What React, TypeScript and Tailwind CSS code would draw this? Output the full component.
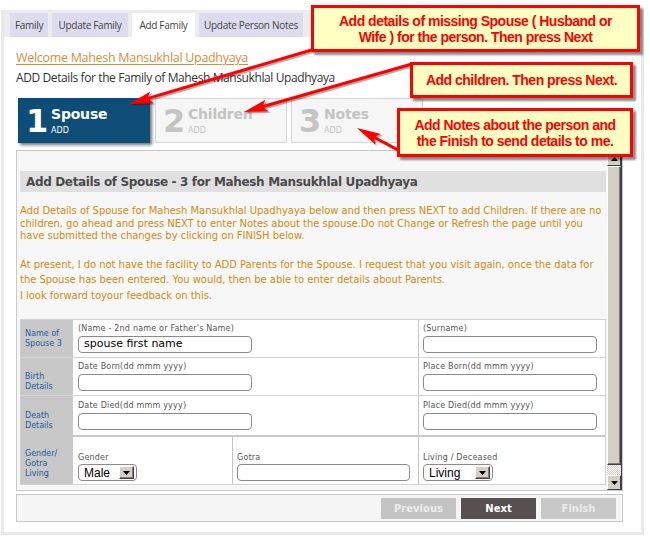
import React from 'react';

const tabs = [
  { label: 'Family', cls: 'w-[38px] bg-[#dcdcee]' },
  { label: 'Update Family', cls: 'w-[76px] bg-[#dcdcee]' },
  { label: 'Add Family', cls: 'w-[63px] bg-white' },
  { label: 'Update Person Notes', cls: 'w-[104px] bg-[#dcdcee]' },
];

const steps = [
  { n: '1', title: 'Spouse', active: true },
  { n: '2', title: 'Children', active: false },
  { n: '3', title: 'Notes', active: false },
];

const arrows = [
  { x1: 318, y1: 48, x2: 129, y2: 104 },
  { x1: 412, y1: 64, x2: 244, y2: 112 },
  { x1: 402, y1: 152, x2: 357, y2: 128 },
];

function Arrow({ x1, y1, x2, y2, color }: { x1: number; y1: number; x2: number; y2: number; color: string }) {
  const dx = x2 - x1;
  const dy = y2 - y1;
  const len = Math.hypot(dx, dy);
  const ux = dx / len;
  const uy = dy / len;
  const L = 24;
  const W = 6;
  const bx = x2 - ux * L;
  const by = y2 - uy * L;
  const head = `${x2},${y2} ${bx - uy * W},${by + ux * W} ${bx + ux * 5},${by + uy * 5} ${bx + uy * W},${by - ux * W}`;
  return (
    <g>
      <line x1={x1} y1={y1} x2={bx + ux * 6} y2={by + uy * 6} stroke={color} strokeWidth={3} />
      <polygon points={head} fill={color} />
    </g>
  );
}

function Callout({ className, lines }: { className: string; lines: string[] }) {
  return (
    <div
      className={`absolute flex flex-col items-center justify-center border-[3px] border-[#ff0000] bg-[#ffffc4] shadow-[3px_3px_2px_rgba(0,0,0,0.45)] font-['Liberation_Sans',Arial,sans-serif] font-bold text-[14px] leading-[16px] tracking-[-0.5px] text-[#ff0000] ${className}`}
    >
      {lines.map((l) => (
        <div key={l} className="whitespace-nowrap">
          {l}
        </div>
      ))}
    </div>
  );
}

function DropArrow() {
  return (
    <div className="w-[15px] h-[13px] bg-[#d4d0c8] border border-t-white border-l-white border-r-[#404040] border-b-[#404040] shadow-[inset_-1px_-1px_0_#808080] flex items-center justify-center">
      <svg width="7" height="4" viewBox="0 0 7 4">
        <path d="M0 0h7L3.5 4z" fill="#000" />
      </svg>
    </div>
  );
}

function Select({ value, className }: { value: string; className: string }) {
  return (
    <div className={`mt-[1px] h-[17px] flex items-center justify-between rounded-[4px] border border-[#8a8a8a] bg-white pl-[5px] pr-[2px] ${className}`}>
      <span className="font-['Liberation_Sans',Arial,sans-serif] text-[12px] leading-none text-black">{value}</span>
      <DropArrow />
    </div>
  );
}

function Field({ label, value = '', w = 'w-[174px]' }: { label: string; value?: string; w?: string }) {
  return (
    <>
      <div className="h-[10px] text-[8px] leading-[10px] tracking-[0.2px] text-[#555] whitespace-nowrap">{label}</div>
      <div className={`mt-[2px] h-[17px] ${w} rounded-[4px] border border-[#8a8a8a] bg-white pl-[5px] flex items-center text-[11px] text-black`}>
        {value}
      </div>
    </>
  );
}

function RowLabel({ lines, pad }: { lines: string[]; pad: string }) {
  return (
    <div className={`w-[53px] shrink-0 bg-[#c8c8c8] pl-[5px] flex flex-col justify-center text-[8px] leading-[10px] text-[#1f5c99] ${pad}`}>
      {lines.map((l) => (
        <span key={l}>{l}</span>
      ))}
    </div>
  );
}

function ScrollBar() {
  return (
    <div className="w-[15px] shrink-0 flex flex-col bg-[#d4d0c8] border-r border-[#404040]">
      <div className="h-[15px] border border-t-white border-l-white border-r-[#404040] border-b-[#404040] flex items-center justify-center">
        <svg width="7" height="4" viewBox="0 0 7 4">
          <path d="M0 4h7L3.5 0z" fill="#000" />
        </svg>
      </div>
      <div className="flex-1 border border-t-white border-l-white border-r-[#404040] border-b-[#404040] shadow-[inset_-1px_-1px_0_#808080]" />
      <div className="h-[10px] bg-[repeating-conic-gradient(#d4d0c8_0%_25%,#ffffff_0%_50%)] bg-[length:2px_2px]" />
      <div className="h-[15px] border border-t-white border-l-white border-r-[#404040] border-b-[#404040] flex items-center justify-center">
        <svg width="7" height="4" viewBox="0 0 7 4">
          <path d="M0 0h7L3.5 4z" fill="#000" />
        </svg>
      </div>
    </div>
  );
}

export default function App() {
  return (
    <div className="relative w-[650px] h-[541px] bg-white overflow-hidden font-['Open_Sans',sans-serif]">
      <div className="ml-[1px] mt-[10px] w-[643px] h-[525px] border-[3px] border-t-0 border-[#e8e8e8] flex flex-col">
        {/* tab strip */}
        <div className="h-[27px] bg-[#ececec] flex items-end gap-[4px] pl-[6px]">
          {tabs.map((t) => (
            <div
              key={t.label}
              className={`h-[24px] flex items-center justify-center whitespace-nowrap text-[10px] tracking-[-0.3px] text-[#444] ${t.cls}`}
            >
              {t.label}
            </div>
          ))}
        </div>

        <div className="pl-[12px] flex flex-col">
          <a className="mt-[11px] h-[20px] leading-[20px] text-[12.5px] tracking-[-0.3px] text-[#d18f3c] underline underline-offset-2 w-fit">
            Welcome Mahesh Mansukhlal Upadhyaya
          </a>
          <div className="h-[20px] leading-[20px] text-[12px] tracking-[-0.4px] text-[#333]">
            ADD Details for the Family of Mahesh Mansukhlal Upadhyaya
          </div>

          {/* wizard steps */}
          <div className="mt-[10px] ml-[2px] flex gap-[4px] font-['DejaVu_Sans',Verdana,sans-serif]">
            {steps.map((s) => (
              <div
                key={s.n}
                className={
                  s.active
                    ? 'w-[132px] h-[45px] flex items-center pl-[8px] bg-[#0e4d78] text-white shadow-[2px_2px_3px_rgba(0,0,0,0.55)] mr-[1px]'
                    : 'w-[132px] h-[45px] flex items-center pl-[7px] bg-[#f6f6f6] border border-[#d6d6d6] text-[#c4c4c4]'
                }
              >
                <span className="w-[25px] text-[32px] font-bold leading-none">{s.n}</span>
                <div className="flex flex-col">
                  <span className="text-[14px] font-bold leading-[16px] tracking-[-0.2px]">{s.title}</span>
                  <span className="mt-[4px] text-[8px] leading-[10px]">ADD</span>
                </div>
              </div>
            ))}
          </div>

          {/* main panel */}
          <div className="mt-[7px] w-[607px] h-[341px] border border-[#c8c8c8] bg-[#f7f7f7] flex font-['DejaVu_Sans',Verdana,sans-serif]">
            <div className="flex-1 overflow-hidden pl-[3px] pt-[20px]">
              <div className="w-[586px] h-[21px] bg-[#e0e0e0] pl-[6px] flex items-center text-[12px] font-bold tracking-[-0.35px] text-[#4a4a4a]">
                Add Details of Spouse - 3 for Mahesh Mansukhlal Upadhyaya
              </div>

              <div className="mt-[13px] text-[10px] leading-[12.5px] tracking-[-0.04px] text-[#d18b10] whitespace-nowrap">
                <div>Add Details of Spouse for Mahesh Mansukhlal Upadhyaya below and then press NEXT to add Children. If there are no</div>
                <div>children, go ahead and press NEXT to enter Notes about the spouse.Do not Change or Refresh the page until you</div>
                <div>have submitted the changes by clicking on FINISH below.</div>
              </div>
              <div className="mt-[14px] text-[10px] leading-[15.5px] tracking-[-0.04px] text-[#d18b10] whitespace-nowrap">
                <div>At present, I do not have the facility to ADD Parents for the Spouse. I request that you visit again, once the data for</div>
                <div>the Spouse has been entered. You would, then be able to enter details about Parents.</div>
                <div>I look forward toyour feedback on this.</div>
              </div>

              {/* spouse form */}
              <div className="mt-[16px] w-[586px] bg-white border-t border-r border-[#d0d0d0]">
                <div className="h-[38px] flex border-b border-[#d2d2d2]">
                  <RowLabel lines={['Name of', 'Spouse 3']} pad="" />
                  <div className="w-[345px] pl-[5px] pt-[4px]">
                    <Field label="(Name - 2nd name or Father's Name)" value="spouse first name" />
                  </div>
                  <div className="flex-1 border-l border-[#c4c4c4] pl-[4px] pt-[4px]">
                    <Field label="(Surname)" />
                  </div>
                </div>
                <div className="h-[38px] flex border-b border-[#d2d2d2]">
                  <RowLabel lines={['Birth', 'Details']} pad="pt-[10px]" />
                  <div className="w-[345px] pl-[5px] pt-[4px]">
                    <Field label="Date Born(dd mmm yyyy)" />
                  </div>
                  <div className="flex-1 border-l border-[#c4c4c4] pl-[4px] pt-[4px]">
                    <Field label="Place Born(dd mmm yyyy)" />
                  </div>
                </div>
                <div className="h-[41px] flex border-b-2 border-[#c8c8c8]">
                  <RowLabel lines={['Death', 'Details']} pad="pt-[10px]" />
                  <div className="w-[345px] pl-[5px] pt-[5px]">
                    <Field label="Date Died(dd mmm yyyy)" />
                  </div>
                  <div className="flex-1 border-l border-[#c4c4c4] pl-[4px] pt-[5px]">
                    <Field label="Place Died(dd mmm yyyy)" />
                  </div>
                </div>
                <div className="h-[48px] flex border-b border-[#d2d2d2]">
                  <RowLabel lines={['Gender/', 'Gotra', 'Living']} pad="pt-[6px]" />
                  <div className="w-[159px] pl-[5px] pt-[16px]">
                    <div className="h-[10px] text-[8px] leading-[10px] tracking-[0.2px] text-[#555]">Gender</div>
                    <Select value="Male" className="w-[59px]" />
                  </div>
                  <div className="w-[186px] border-l border-[#c4c4c4] pl-[4px] pt-[16px]">
                    <div className="h-[10px] text-[8px] leading-[10px] tracking-[0.2px] text-[#555]">Gotra</div>
                    <div className="mt-[1px] h-[17px] w-[173px] rounded-[4px] border border-[#8a8a8a] bg-white" />
                  </div>
                  <div className="flex-1 border-l border-[#c4c4c4] pl-[4px] pt-[16px]">
                    <div className="h-[10px] text-[8px] leading-[10px] tracking-[0.2px] text-[#555]">Living / Deceased</div>
                    <Select value="Living" className="w-[70px]" />
                  </div>
                </div>
              </div>
            </div>
            <ScrollBar />
          </div>

          {/* wizard buttons */}
          <div className="mt-[3px] w-[607px] h-[28px] border border-[#c8c8c8] bg-[#f5f5f5] flex justify-end items-center gap-[5px] pr-[6px] font-['DejaVu_Sans',Verdana,sans-serif] text-[10px] font-bold">
            <div className="w-[75px] h-[21px] flex items-center justify-center bg-[#c4c4c4] text-[#ececec]">Previous</div>
            <div className="w-[75px] h-[21px] flex items-center justify-center bg-[#575050] text-white">Next</div>
            <div className="w-[75px] h-[21px] flex items-center justify-center bg-[#c8c8c8] text-[#ececec]">Finish</div>
          </div>
        </div>
      </div>

      {/* annotation arrows */}
      <svg className="absolute left-0 top-0 pointer-events-none" width="650" height="541">
        <g transform="translate(1.5 1.5)">
          {arrows.map((a, i) => (
            <Arrow key={i} {...a} color="rgba(60,0,0,0.35)" />
          ))}
        </g>
        {arrows.map((a, i) => (
          <Arrow key={i} {...a} color="#ff0000" />
        ))}
      </svg>

      <Callout
        className="left-[311px] top-[5px] w-[329px] h-[47px]"
        lines={['Add details of missing Spouse ( Husband or', 'Wife ) for the person. Then press Next']}
      />
      <Callout className="left-[410px] top-[62px] w-[223px] h-[36px]" lines={['Add children. Then press Next.']} />
      <Callout
        className="left-[397px] top-[108px] w-[236px] h-[49px]"
        lines={['Add Notes about the person and', 'the Finish to send details to me.']}
      />
    </div>
  );
}
